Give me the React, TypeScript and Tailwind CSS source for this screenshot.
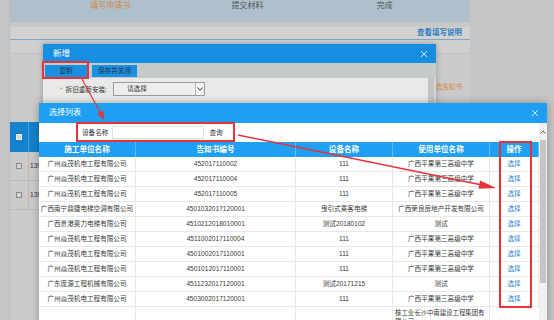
import React from "react";

const rows: [string, string, string, string][] = [
  ["广州焱茂机电工程有限公司", "452017110002", "111", "广西平果第三高级中学"],
  ["广州焱茂机电工程有限公司", "452017110004", "111", "广西平果第三高级中学"],
  ["广州焱茂机电工程有限公司", "452017110005", "111", "广西平果第三高级中学"],
  ["广西南宁鼎捷电梯空调有限公司", "4501032017120001", "曳引式乘客电梯", "广西荣良房地产开发有限公司"],
  ["广西贵港奥力电梯有限公司", "4510212018010001", "测试20180102", "测试"],
  ["广州焱茂机电工程有限公司", "4511002017110004", "111", "广西平果第三高级中学"],
  ["广州焱茂机电工程有限公司", "4501002017110001", "111", "广西平果第三高级中学"],
  ["广州焱茂机电工程有限公司", "4501012017110001", "111", "广西平果第三高级中学"],
  ["广东庞源工程机械有限公司", "4511232017120001", "测试20171215", "测试"],
  ["广州焱茂机电工程有限公司", "4503002017120001", "111", "广西平果第三高级中学"],
];

function CloseX({ color }: { color: string }) {
  return (
    <svg width="8" height="8" viewBox="0 0 8 8">
      <path d="M1 1 L7 7 M7 1 L1 7" stroke={color} strokeWidth="1" fill="none" />
    </svg>
  );
}

export default function App() {
  const cellBase = "h-[15px] flex items-center justify-center border-b border-r border-[#e8e8e8] text-[6.6px] whitespace-nowrap";
  const cell = cellBase + " text-[#3a3a3a]";
  const linkCell = cellBase + " text-[#2a86d0]";
  const head = "h-[15px] flex items-center justify-center border-r border-[#62bdf5] text-[7.6px] font-bold text-white bg-[#1fa0f2]";
  return (
    <div className="relative w-[554px] h-[320px] overflow-hidden bg-[#c5c5c5] font-['Liberation_Sans','Noto_Sans_CJK_SC',sans-serif]">
      {/* underlying page */}
      <div className="ml-[9px] w-[461px] h-full bg-[#cacaca] border-l border-[#bdbdbd] flex flex-col">
        <div className="h-[22px] bg-[#afc0cd] grid grid-cols-[137px_137px_137px] pl-[32px] pt-[1px]">
          <div className="text-center text-[8px] leading-[10px] text-[#d9873a]">填写申请书</div>
          <div className="text-center text-[8px] leading-[10px] text-[#555]">提交材料</div>
          <div className="text-center text-[8px] leading-[10px] text-[#555]">完成</div>
        </div>
        <div className="h-[5px] bg-[#c8c8c8]" />
        <div className="h-[12px] bg-[#d2d2d2] flex items-center justify-end pr-[8px]">
          <span className="text-[7.5px] font-bold text-[#2b7cc0]">查看填写说明</span>
        </div>
        <div className="h-px bg-[#7fa8c8]" />
        <div className="h-[13px] bg-[#cfcfcf]" />
        <div className="flex-1 bg-[#cbcbcb] border-t border-[#c2c2c2] relative">
          <div className="h-[38px] flex items-end justify-end pr-[8px]">
            <span className="text-[6.6px] text-[#d9873a]">已选告知书</span>
          </div>
          <div className="mt-[30px] w-[70px] flex flex-col">
            <div className="h-[30px] flex bg-[#1482cc]">
              <div className="w-[19px] border-r border-[#4a9fd6] flex items-center justify-center">
                <div className="w-[6px] h-[6px] bg-[#d9d9d9] border border-[#eeeeee]" />
              </div>
              <div className="flex-1" />
            </div>
            {[0, 1].map((i) => (
              <div key={i} className="h-[29px] flex border-b border-[#bababa]">
                <div className="w-[19px] border-r border-[#bababa] flex items-center justify-center">
                  <div className="w-[6px] h-[6px] border border-[#8a8a8a] bg-[#d4d4d4]" />
                </div>
                <div className="flex-1 flex items-center pl-[1px] text-[6.6px] text-[#333]">13!</div>
              </div>
            ))}
          </div>
        </div>
      </div>

      {/* 新增 dialog */}
      <div className="absolute left-[43px] top-[44px] w-[393px] h-[80px] bg-[#e9e9e9] shadow-[0_0_6px_rgba(0,0,0,0.25)] flex flex-col">
        <div className="h-[19px] bg-[#178fe0] flex items-center justify-between pl-[10px] pr-[8px]">
          <span className="text-[8.5px] text-white">新增</span>
          <CloseX color="#cfe6f8" />
        </div>
        <div className="h-[15px] bg-[#c4c9c9] flex items-center pl-[2px] gap-[5px]">
          <div className="w-[42px] h-[12px] bg-[#1d8fe0] flex items-center justify-center text-[6.6px] text-[#1b2f4a]">复制</div>
          <div className="w-[45px] h-[12px] bg-[#1d8fe0] flex items-center justify-center text-[6.6px] text-[#1b2f4a]">保存并关闭</div>
        </div>
        <div className="flex-1 flex">
          <div className="flex-1 flex items-start pt-[4px] pl-[17px]">
            <span className="text-[6.6px] text-[#e08a40] mt-[3px] mr-[3px]">*</span>
            <span className="text-[6.6px] text-[#333] mt-[3px]">拆旧重新安装:</span>
            <div className="ml-[6px] w-[92px] h-[14px] bg-[#ededed] border border-[#9c9c9c] flex items-center">
              <span className="flex-1 pl-[13px] text-[6.6px] text-[#333]">请选择</span>
              <div className="w-[9px] h-full border-l border-[#b5b5b5] bg-[#f4f4f4] flex items-center justify-center">
                <svg width="6" height="4" viewBox="0 0 6 4">
                  <path d="M0.5 0.5 L3 3.2 L5.5 0.5" stroke="#333" strokeWidth="1" fill="none" />
                </svg>
              </div>
            </div>
          </div>
          <div className="w-[6px] bg-[#c3c3c3]" />
          <div className="w-[2px] bg-[#d6d6d6]" />
        </div>
      </div>

      {/* 选择列表 dialog */}
      <div className="absolute left-[39px] top-[103px] w-[508px] h-[240px] bg-white shadow-[0_0_8px_rgba(0,0,0,0.3)] flex flex-col">
        <div className="h-[20px] bg-[#1e9ff2] flex items-center justify-between pl-[10px] pr-[8px]">
          <span className="text-[8px] text-white">选择列表</span>
          <CloseX color="#d3ecfc" />
        </div>
        <div className="flex flex-1">
          <div className="w-[500px] flex flex-col">
            <div className="h-[19px] flex items-center pl-[43px]">
              <span className="text-[6.6px] text-[#333] mr-[4px]">设备名称</span>
              <div className="w-[92px] h-[13px] border border-[#e2e2e2] bg-white" />
              <span className="ml-[5px] text-[6.6px] text-[#333]">查询</span>
            </div>
            <div className="grid grid-cols-[97px_160px_97px_97px_49px]">
              <div className={head}>施工单位名称</div>
              <div className={head}>告知书编号</div>
              <div className={head}>设备名称</div>
              <div className={head}>使用单位名称</div>
              <div className={head}>操作</div>
              {rows.map((r, i) => (
                <React.Fragment key={i}>
                  <div className={cell}>{r[0]}</div>
                  <div className={cell}>{r[1]}</div>
                  <div className={cell}>{r[2]}</div>
                  <div className={cell}>{r[3]}</div>
                  <div className={linkCell}>选择</div>
                </React.Fragment>
              ))}
              <div className="h-[30px] border-r border-[#e8e8e8]" />
              <div className="h-[30px] border-r border-[#e8e8e8]" />
              <div className="h-[30px] border-r border-[#e8e8e8]" />
              <div className="h-[30px] border-r border-[#e8e8e8] pl-[2px] pt-[1px] text-[6.4px] leading-[9px] text-[#3a3a3a]">核工业长沙中南建设工程集团有限公司</div>
              <div className="h-[30px]" />
            </div>
          </div>
          <div className="w-[8px] bg-[#f1f1f1] flex flex-col">
            <div className="h-[17px] flex items-center justify-center">
              <svg width="6" height="4" viewBox="0 0 6 4">
                <path d="M0.5 3.5 L3 1 L5.5 3.5" stroke="#555" strokeWidth="1" fill="none" />
              </svg>
            </div>
            <div className="ml-[1px] w-[6px] h-[143px] bg-[#c6c6c6]" />
          </div>
        </div>
      </div>

      {/* red annotation boxes */}
      <div className="absolute left-[42px] top-[61px] w-[47px] h-[18px] border-2 border-[#e8323a]" />
      <div className="absolute left-[76px] top-[122px] w-[159px] h-[20px] border-2 border-[#e8323a]" />
      <div className="absolute left-[499px] top-[141px] w-[33px] h-[167px] border-2 border-[#e8323a]" />

      {/* arrows */}
      <svg className="absolute left-0 top-0 pointer-events-none" width="554" height="320" viewBox="0 0 554 320">
        <line x1="82" y1="79" x2="100.5" y2="113" stroke="#e8323a" strokeWidth="1.2" />
        <polygon points="104,120 103.2,110.3 97.3,113.4" fill="#e8323a" />
        <line x1="238" y1="135" x2="482" y2="185" stroke="#e8323a" strokeWidth="1.5" />
        <polygon points="496,188 478.5,188.7 480.1,180.5" fill="#e8323a" />
      </svg>
    </div>
  );
}
